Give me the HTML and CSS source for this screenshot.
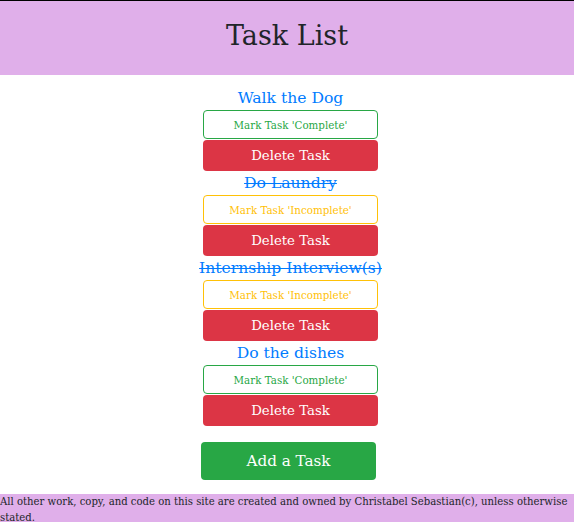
FILE: index.html
```html
<!DOCTYPE html>
<html lang="en">
<head>
<meta charset="utf-8">
<title>Task List</title>
<link rel="stylesheet" href="styles.css">
</head>
<body>
<header class="banner">
  <h1 class="banner-title">Task List</h1>
</header>
<main class="tasks">
  <div class="task">
    <div class="task-title">Walk the Dog</div>
    <button class="btn-toggle">Mark Task 'Complete'</button>
    <button class="btn-delete">Delete Task</button>
  </div>
  <div class="task">
    <div class="task-title done">Do Laundry</div>
    <button class="btn-toggle incomplete">Mark Task 'Incomplete'</button>
    <button class="btn-delete">Delete Task</button>
  </div>
  <div class="task">
    <div class="task-title done">Internship Interview(s)</div>
    <button class="btn-toggle incomplete">Mark Task 'Incomplete'</button>
    <button class="btn-delete">Delete Task</button>
  </div>
  <div class="task">
    <div class="task-title">Do the dishes</div>
    <button class="btn-toggle">Mark Task 'Complete'</button>
    <button class="btn-delete">Delete Task</button>
  </div>
  <button class="btn-add">Add a Task</button>
</main>
<footer class="site-footer">
  All other work, copy, and code on this site are created and owned by Christabel Sebastian(c), unless otherwise stated.
</footer>
</body>
</html>
```

FILE: styles.css
```css
html, body {
  margin: 0;
  padding: 0;
}

body {
  font-family: "DejaVu Serif", serif;
  color: #212529;
  background: #ffffff;
}

.banner {
  border-top: 1px solid #000000;
  background: #e0afea;
  height: 74px;
  display: flex;
  align-items: center;
  justify-content: center;
}

.banner-title {
  margin: 0 0 6px 0;
  font-size: 27px;
  font-weight: normal;
  line-height: 1;
  color: #212529;
}

.tasks {
  display: flex;
  flex-direction: column;
  align-items: center;
  padding-top: 11px;
}

.task {
  width: 175px;
  display: flex;
  flex-direction: column;
  align-items: center;
  margin-left: 7px;
}

.task-title {
  height: 24px;
  line-height: 24px;
  font-size: 15.6px;
  color: #007bff;
  white-space: nowrap;
}

.task-title.done {
  text-decoration: line-through;
}

.btn-toggle,
.btn-delete,
.btn-add {
  font-family: "DejaVu Serif", serif;
  border-radius: 4px;
  padding: 0;
  cursor: pointer;
}

.btn-toggle {
  width: 175px;
  height: 29px;
  border: 1px solid #28a745;
  background: #ffffff;
  color: #28a745;
  font-size: 10.3px;
}

.btn-toggle.incomplete {
  border-color: #ffc107;
  color: #ffc107;
}

.btn-delete {
  width: 175px;
  height: 31px;
  margin-top: 1px;
  border: none;
  background: #dc3545;
  color: #ffffff;
  font-size: 13.3px;
}

.btn-add {
  width: 175px;
  height: 38px;
  margin-top: 16px;
  margin-left: 3px;
  border: none;
  background: #28a745;
  color: #ffffff;
  font-size: 15.2px;
}

.site-footer {
  margin-top: 14px;
  background: #e0afea;
  font-size: 10.1px;
  line-height: 16px;
  color: #212529;
}
```
